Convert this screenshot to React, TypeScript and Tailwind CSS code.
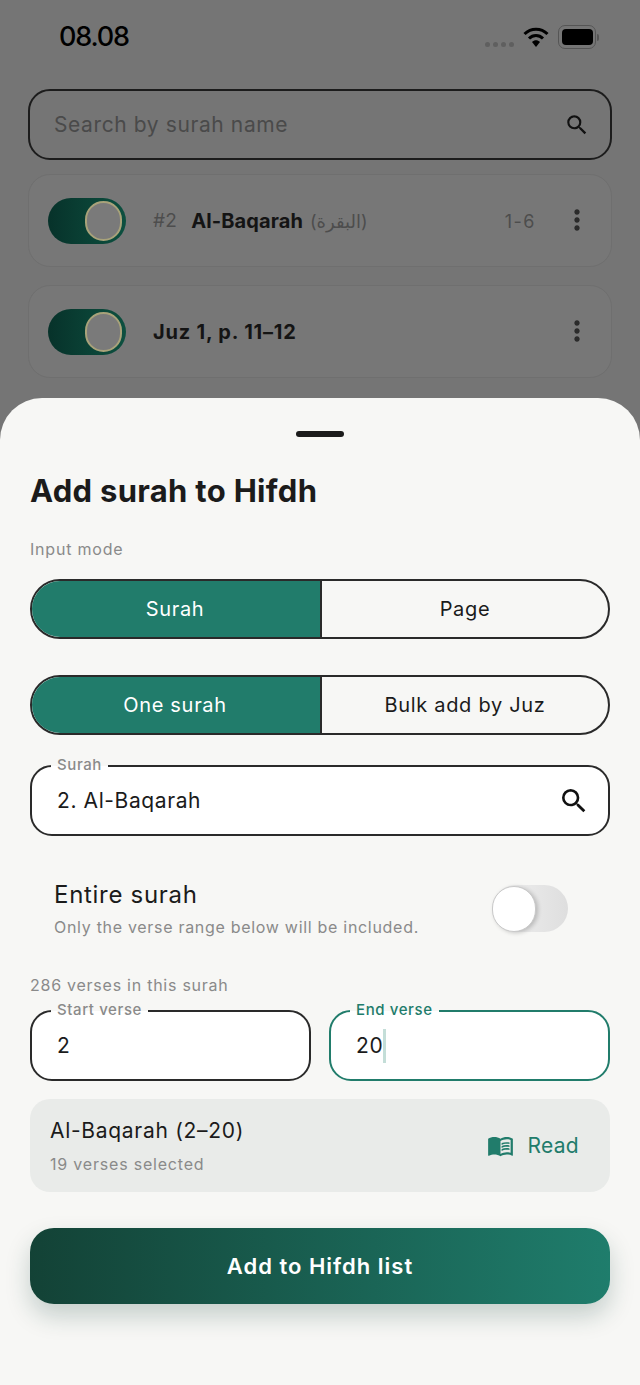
import { MdMenuBook, MdMoreVert, MdSearch } from "react-icons/md";

const font = { fontFamily: 'Inter, "DejaVu Sans", sans-serif' };

function StatusBar() {
  return (
    <div className="flex h-[89px] items-start justify-between pl-[59px] pr-[41px] pt-[19px]">
      <span className="text-[27px] font-medium leading-9 tracking-[-1.2px] text-black">08.08</span>
      <div className="mt-[6px] flex items-center">
        <div className="mt-[14px] mr-[9px] flex gap-[3px]">
          <span className="size-[5px] rounded-full bg-[#5f5f5f]" />
          <span className="size-[5px] rounded-full bg-[#5f5f5f]" />
          <span className="size-[5px] rounded-full bg-[#5f5f5f]" />
          <span className="size-[5px] rounded-full bg-[#5f5f5f]" />
        </div>
        <svg width="26" height="22" viewBox="0 0 26 22" className="mr-[9px]">
          <path d="M1.5 8 C8 1.5 18 1.5 24.5 8" fill="none" stroke="#000" strokeWidth="3" />
          <path d="M6 12.5 C10 8.5 16 8.5 20 12.5" fill="none" stroke="#000" strokeWidth="3" />
          <path d="M9 16 C11.5 13.6 14.5 13.6 17 16 L13 21 Z" fill="#000" />
        </svg>
        <div className="flex h-[24px] w-[38px] items-center justify-center rounded-[7px] border-[1.5px] border-[#555555]">
          <div className="h-[16px] w-[31px] rounded-[4px] bg-black" />
        </div>
        <div className="ml-[1px] h-[7px] w-[2px] rounded-r-sm bg-[#555555]" />
      </div>
    </div>
  );
}

function ListToggle() {
  return (
    <div className="flex h-[46px] w-[78px] shrink-0 items-center justify-end rounded-full bg-[linear-gradient(90deg,#07322a,#0d5040)] pr-[4px]">
      <div className="h-[40px] w-[37px] rounded-full border-[2px] border-[#a8a27a] bg-[#7a7a7a]" />
    </div>
  );
}

function ListCard({ children }: { children: React.ReactNode }) {
  return (
    <div className="flex h-[93px] items-center rounded-[22px] border border-[#6f6f6f] bg-[#777777] pl-[19px] pr-[22px]">
      <ListToggle />
      <div className="flex flex-1 items-center pt-[1px]">{children}</div>
      <MdMoreVert className="-mr-[4px] -mt-[2px] text-[#2b2b2b]" size={32} />
    </div>
  );
}

function Segmented({ left, right }: { left: string; right: string }) {
  return (
    <div className="grid h-[60px] grid-cols-2 overflow-hidden rounded-full border-2 border-[#2a2a2a] text-[20px] tracking-[0.7px]">
      <div className="flex items-center justify-center pr-[2px] bg-[#217c6b] text-white">{left}</div>
      <div className="flex items-center justify-center border-l-2 border-[#2a2a2a] text-[#1b1b1b]">{right}</div>
    </div>
  );
}

function Field({
  label,
  value,
  active,
  className,
  children,
}: {
  label: string;
  value: string;
  active?: boolean;
  className?: string;
  children?: React.ReactNode;
}) {
  return (
    <div
      className={`relative flex h-[71px] items-center rounded-[22px] border-2 bg-white pl-[25px] pr-[18px] text-[21px] tracking-[0.6px] text-[#1b1b1b] ${
        active ? "border-[#217c6b]" : "border-[#2a2a2a]"
      } ${className ?? ""}`}
    >
      <span
        className={`absolute -top-[11px] left-[19px] bg-[linear-gradient(180deg,#f7f7f5_55%,#ffffff_55%)] px-[6px] text-[15px] leading-[18px] tracking-[0.6px] ${
          active ? "font-medium text-[#217c6b]" : "font-medium text-[#8a8a8a]"
        }`}
      >
        {label}
      </span>
      <span>{value}</span>
      {children}
    </div>
  );
}

export default function App() {
  return (
    <main className="flex h-[1385px] w-[640px] flex-col overflow-hidden bg-[#757575]" style={font}>
      <StatusBar />
      <div className="flex flex-col px-[28px]">
        <div className="mb-[14px] flex h-[71px] items-center justify-between rounded-[22px] border-2 border-[#1c1c1c] pl-[24px] pr-[20px]">
          <span className="text-[21px] tracking-[0.6px] text-[#4a4a4a]">Search by surah name</span>
          <MdSearch className="text-[#111111]" size={26} />
        </div>
        <ListCard>
          <span className="ml-[27px] text-[19px] tracking-[0.3px] text-[#4d4d4d]">#2</span>
          <span className="ml-[14px] text-[20px] font-bold tracking-[0.1px] text-[#141414]">Al-Baqarah</span>
          <span className="ml-[7px] text-[18px] text-[#4d4d4d]">(البقرة)</span>
          <span className="ml-auto mr-[25px] text-[18px] tracking-[1.5px] text-[#4d4d4d]">1-6</span>
        </ListCard>
        <div className="h-[18px]" />
        <ListCard>
          <span className="ml-[27px] text-[20px] font-bold tracking-[0.8px] text-[#141414]">Juz 1, p. 11–12</span>
        </ListCard>
      </div>

      <section className="mt-[20px] flex-1 rounded-t-[42px] bg-[#f7f7f5] px-[30px]">
        <div className="mx-auto mt-[33px] h-[6px] w-[48px] rounded-full bg-[#1b1b1b]" />
        <h1 className="mt-[33px] text-[31px] font-bold leading-[42px] tracking-[0.3px] text-[#1b1b1b]">Add surah to Hifdh</h1>
        <p className="mt-[27px] text-[16px] leading-5 tracking-[0.8px] text-[#8a8a8a]">Input mode</p>
        <div className="mt-[20px]">
          <Segmented left="Surah" right="Page" />
        </div>
        <div className="mt-[36px]">
          <Segmented left="One surah" right="Bulk add by Juz" />
        </div>
        <Field label="Surah" value="2. Al-Baqarah" className="mt-[30px] justify-between">
          <MdSearch className="text-[#111111]" size={32} />
        </Field>

        <div className="mt-[43px] flex items-start justify-between pl-[24px] pr-[42px]">
          <div>
            <p className="text-[24px] leading-[32px] tracking-[0.7px] text-[#1b1b1b]">Entire surah</p>
            <p className="mt-[6px] text-[16px] leading-5 tracking-[0.7px] text-[#8a8a8a]">Only the verse range below will be included.</p>
          </div>
          <div className="mt-[6px] flex h-[47px] w-[76px] items-center rounded-full bg-[linear-gradient(90deg,#f2f2f2,#dedede)]">
            <div className="h-[46px] w-[44px] rounded-full border border-[#c9c9c9] bg-white shadow-[2px_1px_4px_rgba(0,0,0,0.2)]" />
          </div>
        </div>

        <p className="mt-[38px] text-[16px] leading-5 tracking-[0.75px] text-[#8a8a8a]">286 verses in this surah</p>
        <div className="mt-[15px] grid grid-cols-2 gap-[18px]">
          <Field label="Start verse" value="2" />
          <Field label="End verse" value="20" active>
            <span className="h-[34px] w-[3px] bg-[#c4ded8]" />
          </Field>
        </div>

        <div className="mt-[18px] flex h-[93px] items-center justify-between rounded-[20px] bg-[#e9ebe9] pl-[20px] pr-[31px]">
          <div>
            <p className="text-[21px] leading-7 tracking-[0.7px] text-[#1b1b1b]">Al-Baqarah (2–20)</p>
            <p className="mt-[9px] text-[16px] leading-5 tracking-[0.8px] text-[#8a8a8a]">19 verses selected</p>
          </div>
          <div className="flex items-center text-[#217c6b]">
            <MdMenuBook size={27} />
            <span className="ml-[13px] text-[21px] tracking-[0.3px]">Read</span>
          </div>
        </div>

        <button className="mt-[36px] flex h-[76px] w-full items-center justify-center rounded-[24px] bg-[linear-gradient(90deg,#134236,#1f7d6c)] text-[22px] font-semibold tracking-[1px] text-white shadow-[0_12px_24px_rgba(19,66,54,0.22)]">
          Add to Hifdh list
        </button>
      </section>
    </main>
  );
}
